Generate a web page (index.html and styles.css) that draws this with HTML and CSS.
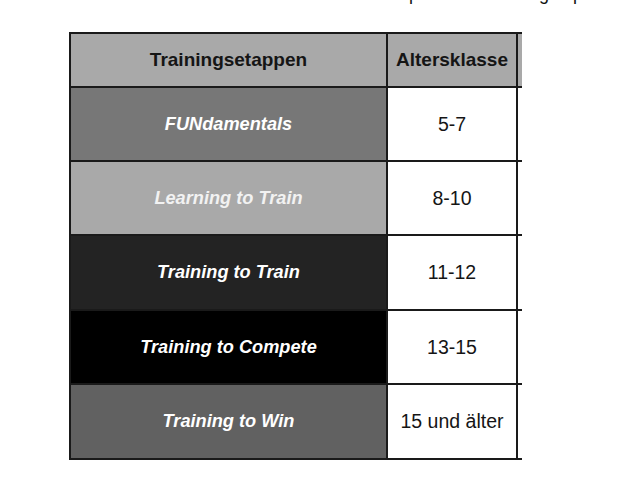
FILE: index.html
```html
<!DOCTYPE html>
<html lang="de">
<head>
<meta charset="utf-8">
<title>Trainingsetappen</title>
<link rel="stylesheet" href="styles.css">
</head>
<body>
<div class="caption">Stufen pro Alter Training: Sport</div>
<div class="frame">
  <table class="stages">
    <tr class="head">
      <th class="c1">Trainingsetappen</th>
      <th class="c2">Altersklasse</th>
      <th class="c3"></th>
    </tr>
    <tr class="r1">
      <td class="stage">FUNdamentals</td>
      <td class="age">5-7</td>
      <td class="more"></td>
    </tr>
    <tr class="r2">
      <td class="stage">Learning to Train</td>
      <td class="age">8-10</td>
      <td class="more"></td>
    </tr>
    <tr class="r3">
      <td class="stage">Training to Train</td>
      <td class="age">11-12</td>
      <td class="more"></td>
    </tr>
    <tr class="r4">
      <td class="stage">Training to Compete</td>
      <td class="age">13-15</td>
      <td class="more"></td>
    </tr>
    <tr class="r5">
      <td class="stage">Training to Win</td>
      <td class="age">15 und älter</td>
      <td class="more"></td>
    </tr>
  </table>
</div>
</body>
</html>
```
FILE: styles.css
```css
html, body {
  margin: 0;
  padding: 0;
  background: #ffffff;
}
body {
  width: 626px;
  height: 486px;
  overflow: hidden;
  font-family: "Liberation Sans", Arial, sans-serif;
  color: #111;
}
.caption {
  margin-top: -15px;
  height: 18px;
  line-height: 18px;
  font-size: 18px;
  padding-left: 350px;
  word-spacing: 2px;
  white-space: nowrap;
  color: #111;
}
.frame {
  margin-top: 29px;
  margin-left: 69px;
  width: 453px;
  overflow: hidden;
}
.stages {
  border-collapse: separate;
  border-spacing: 0;
  table-layout: fixed;
  width: 549px;
  border-top: 2px solid #1a1a1a;
  border-left: 2px solid #1a1a1a;
}
.stages th,
.stages td {
  box-sizing: border-box;
  padding: 0;
  border-right: 2px solid #1a1a1a;
  border-bottom: 2px solid #1a1a1a;
  text-align: center;
  vertical-align: middle;
  white-space: nowrap;
}
.c1 { width: 317px; }
.c2 { width: 130px; }
.c3 { width: 100px; }
.head th {
  height: 54px;
  background: #a9a9a9;
  font-size: 19px;
  font-weight: bold;
  color: #151515;
}
.stages td { height: 74px; }
.r3 td, .r5 td { height: 75px; }
.stage {
  font-size: 18.2px;
  font-weight: bold;
  font-style: italic;
  color: #ffffff;
}
.age {
  background: #ffffff;
  font-size: 19.5px;
  color: #151515;
}
.more { background: #ffffff; }
.r1 .stage { background: #777777; }
.r2 .stage { background: #a9a9a9; color: #f2f2f2; }
.r3 .stage { background: #232323; }
.r4 .stage { background: #000000; }
.r5 .stage { background: #616161; }
```
